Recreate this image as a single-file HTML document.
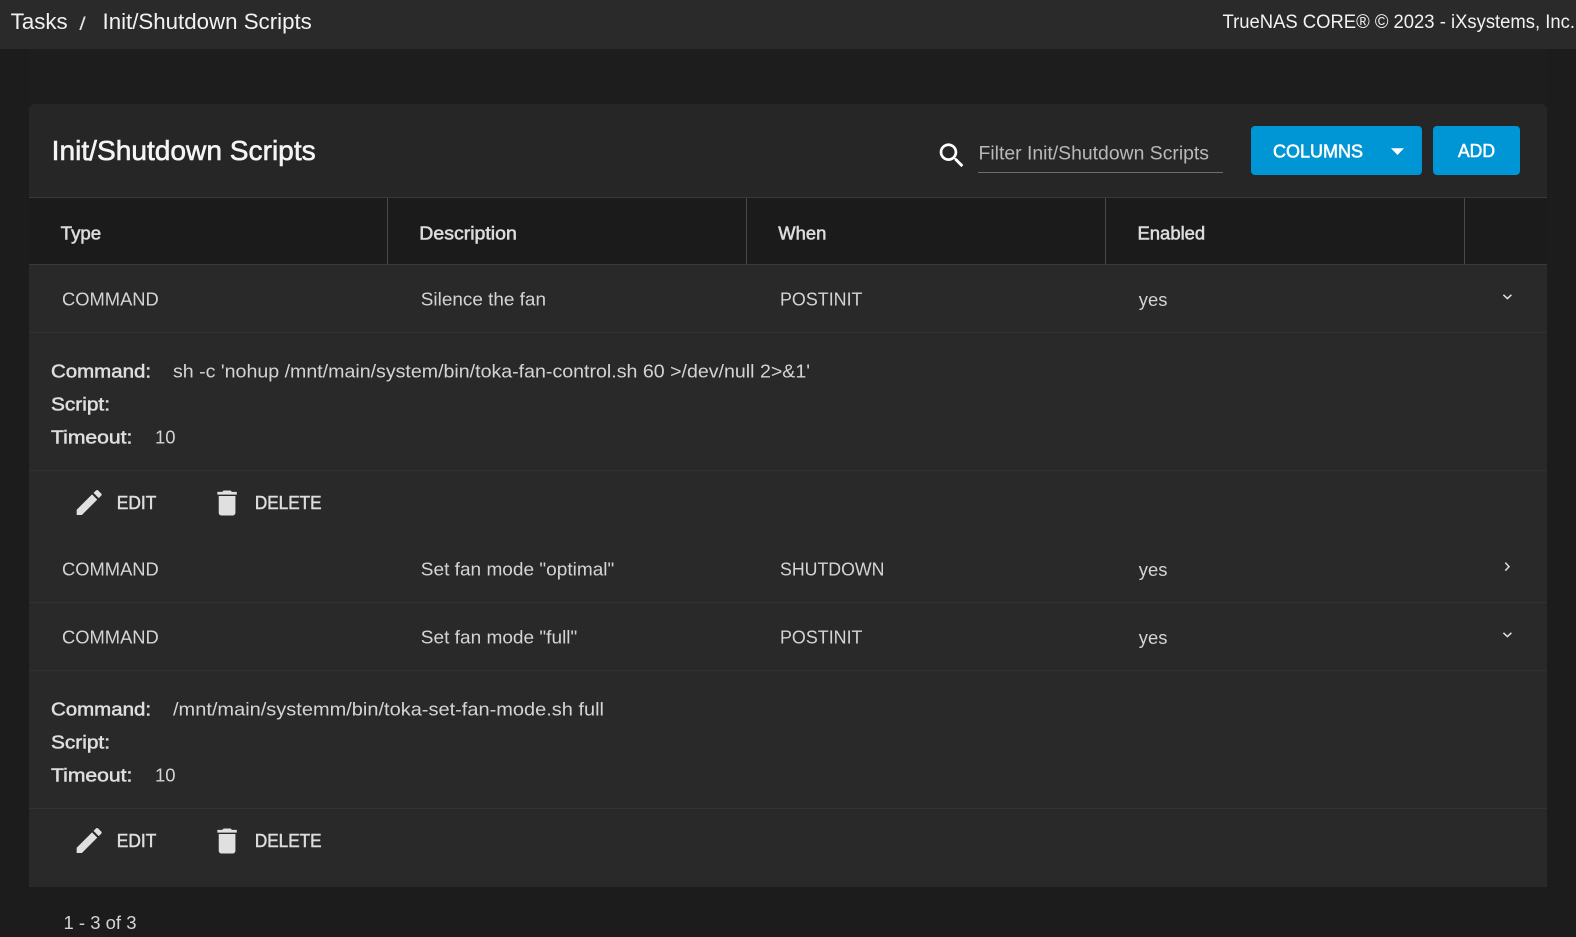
<!DOCTYPE html>
<html><head><meta charset="utf-8"><title>Init/Shutdown Scripts</title>
<style>
html,body{margin:0;padding:0;width:1576px;height:937px;overflow:hidden;background:#1c1c1c}
svg{display:block}
text{font-family:"Liberation Sans",sans-serif;font-size:18px;fill:#d4d4d4}
.m{fill:#dedede;stroke:#dedede;stroke-width:.5px}
.h{fill:#dcdcdc;stroke:#dcdcdc;stroke-width:.55px}
</style></head><body>
<svg width="1576" height="937" viewBox="0 0 1576 937" xmlns="http://www.w3.org/2000/svg">
<rect width="1576" height="937" fill="#1c1c1c"/>
<rect x="29" y="49" width="1518" height="55" fill="#1d1d1d"/>
<rect width="1576" height="49" fill="#2a2a2a"/>
<text x="10.7" y="29" style="font-size:22px;fill:#f2f2f2" textLength="57" lengthAdjust="spacingAndGlyphs">Tasks</text>
<text x="79.3" y="30" style="font-size:18px;fill:#e6e6e6" textLength="6.5" lengthAdjust="spacingAndGlyphs">/</text>
<text x="102.5" y="29" style="font-size:22px;fill:#f2f2f2" textLength="209.3" lengthAdjust="spacingAndGlyphs">Init/Shutdown Scripts</text>
<text x="1222.5" y="28" style="font-size:19px;fill:#f2f2f2" textLength="352.5" lengthAdjust="spacingAndGlyphs">TrueNAS CORE® © 2023 - iXsystems, Inc.</text>

<path d="M29 887V110a6 6 0 0 1 6-6H1541a6 6 0 0 1 6 6V887Z" fill="#292929"/>
<path d="M29 197V110a6 6 0 0 1 6-6H1541a6 6 0 0 1 6 6V197Z" fill="#262626"/>
<text x="51.7" y="160" style="font-size:28px;fill:#f4f4f4;stroke:#f4f4f4;stroke-width:.6px" textLength="264" lengthAdjust="spacingAndGlyphs">Init/Shutdown Scripts</text>

<g transform="translate(935.6 139.3) scale(1.355)"><path fill="#fff" d="M15.5 14h-.79l-.28-.27C15.41 12.59 16 11.11 16 9.5 16 5.91 13.09 3 9.5 3S3 5.91 3 9.5 5.91 16 9.5 16c1.61 0 3.09-.59 4.23-1.57l.27.28v.79l5 4.99L20.49 19l-4.99-5zm-6 0C7.01 14 5 11.99 5 9.5S7.01 5 9.5 5 14 7.01 14 9.5 11.99 14 9.5 14z"/></g>
<text x="978.5" y="159.3" style="font-size:19px;fill:#b8b8b8" textLength="230.5" lengthAdjust="spacingAndGlyphs">Filter Init/Shutdown Scripts</text>
<rect x="978" y="172" width="245" height="1" fill="#6e6e6e"/>

<rect x="1251" y="126" width="171" height="49" rx="4" fill="#0095d5"/>
<text x="1273" y="157.5" style="fill:#fff;stroke:#fff;stroke-width:.55px" textLength="90" lengthAdjust="spacingAndGlyphs">COLUMNS</text>
<path d="M1391 148.3H1404L1397.5 155Z" fill="#fff"/>
<rect x="1433" y="126" width="87" height="49" rx="4" fill="#0095d5"/>
<text x="1458" y="157" style="fill:#fff;stroke:#fff;stroke-width:.55px" textLength="37" lengthAdjust="spacingAndGlyphs">ADD</text>

<rect x="29" y="197" width="1518" height="67" fill="#1b1b1b"/>
<rect x="29" y="197" width="1518" height="1" fill="#393939"/>
<rect x="29" y="264" width="1518" height="1" fill="#393939"/>
<rect x="387" y="198" width="1" height="66" fill="#484848"/>
<rect x="746" y="198" width="1" height="66" fill="#484848"/>
<rect x="1105" y="198" width="1" height="66" fill="#484848"/>
<rect x="1464" y="198" width="1" height="66" fill="#484848"/>
<text class="h" x="60.7" y="239.5" textLength="40.5" lengthAdjust="spacingAndGlyphs">Type</text>
<text class="h" x="419.3" y="239.5" textLength="97.5" lengthAdjust="spacingAndGlyphs">Description</text>
<text class="h" x="778.3" y="239.5" textLength="48" lengthAdjust="spacingAndGlyphs">When</text>
<text class="h" x="1137.5" y="239.5" textLength="67.7" lengthAdjust="spacingAndGlyphs">Enabled</text>

<!-- row 1 -->
<text x="62" y="305.7" textLength="96.8" lengthAdjust="spacingAndGlyphs">COMMAND</text>
<text x="420.8" y="305.7" textLength="125.2" lengthAdjust="spacingAndGlyphs">Silence the fan</text>
<text x="780" y="305.7" textLength="82.5" lengthAdjust="spacingAndGlyphs">POSTINIT</text>
<text x="1138.8" y="305.9" textLength="28.6" lengthAdjust="spacingAndGlyphs">yes</text>
<path d="M1503.4 294.8L1507.4 298.6L1511.4 294.8" fill="none" stroke="#e0e0e0" stroke-width="1.5"/>
<rect x="29" y="332" width="1518" height="1" fill="#323232"/>
<text class="m" x="51" y="377.4" textLength="100" lengthAdjust="spacingAndGlyphs">Command:</text>
<text x="173" y="377.4" textLength="637" lengthAdjust="spacingAndGlyphs">sh -c 'nohup /mnt/main/system/bin/toka-fan-control.sh 60 &gt;/dev/null 2&gt;&amp;1'</text>
<text class="m" x="51" y="410.7" textLength="59" lengthAdjust="spacingAndGlyphs">Script:</text>
<text class="m" x="51" y="443.6" textLength="81.4" lengthAdjust="spacingAndGlyphs">Timeout:</text>
<text x="155" y="443.6" textLength="20.5" lengthAdjust="spacingAndGlyphs">10</text>
<rect x="29" y="470" width="1518" height="1" fill="#323232"/>
<g transform="translate(72.5 485.8) scale(1.39)"><path fill="#e0e0e0" d="M3 17.25V21h3.75L17.81 9.94l-3.75-3.75L3 17.25zM20.71 7.04c.39-.39.39-1.02 0-1.41l-2.34-2.34c-.39-.39-1.02-.39-1.41 0l-1.83 1.83 3.75 3.75 1.83-1.83z"/></g>
<text class="m" x="116.8" y="508.8" textLength="39.5" lengthAdjust="spacingAndGlyphs">EDIT</text>
<g transform="translate(210.4 486.3) scale(1.39)"><path fill="#e0e0e0" d="M6 19c0 1.1.9 2 2 2h8c1.1 0 2-.9 2-2V7H6v12zM19 4h-3.5l-1-1h-5l-1 1H5v2h14V4z"/></g>
<text class="m" x="254.9" y="508.8" textLength="66.6" lengthAdjust="spacingAndGlyphs">DELETE</text>

<!-- row 2 -->
<text x="62" y="575.7" textLength="96.8" lengthAdjust="spacingAndGlyphs">COMMAND</text>
<text x="420.8" y="575.7" textLength="193.5" lengthAdjust="spacingAndGlyphs">Set fan mode "optimal"</text>
<text x="780" y="575.7" textLength="104.5" lengthAdjust="spacingAndGlyphs">SHUTDOWN</text>
<text x="1138.8" y="575.9" textLength="28.6" lengthAdjust="spacingAndGlyphs">yes</text>
<path d="M1505.3 562.6L1509 566.6L1505.3 570.6" fill="none" stroke="#e0e0e0" stroke-width="1.5"/>
<rect x="29" y="602" width="1518" height="1" fill="#323232"/>

<!-- row 3 -->
<text x="62" y="643.7" textLength="96.8" lengthAdjust="spacingAndGlyphs">COMMAND</text>
<text x="420.8" y="643.7" textLength="156.5" lengthAdjust="spacingAndGlyphs">Set fan mode "full"</text>
<text x="780" y="643.7" textLength="82.5" lengthAdjust="spacingAndGlyphs">POSTINIT</text>
<text x="1138.8" y="643.9" textLength="28.6" lengthAdjust="spacingAndGlyphs">yes</text>
<path d="M1503.4 632.8L1507.4 636.6L1511.4 632.8" fill="none" stroke="#e0e0e0" stroke-width="1.5"/>
<rect x="29" y="670" width="1518" height="1" fill="#323232"/>
<text class="m" x="51" y="715.4" textLength="100" lengthAdjust="spacingAndGlyphs">Command:</text>
<text x="173" y="715.4" textLength="431" lengthAdjust="spacingAndGlyphs">/mnt/main/systemm/bin/toka-set-fan-mode.sh full</text>
<text class="m" x="51" y="748.7" textLength="59" lengthAdjust="spacingAndGlyphs">Script:</text>
<text class="m" x="51" y="781.6" textLength="81.4" lengthAdjust="spacingAndGlyphs">Timeout:</text>
<text x="155" y="781.6" textLength="20.5" lengthAdjust="spacingAndGlyphs">10</text>
<rect x="29" y="808" width="1518" height="1" fill="#323232"/>
<g transform="translate(72.5 823.8) scale(1.39)"><path fill="#e0e0e0" d="M3 17.25V21h3.75L17.81 9.94l-3.75-3.75L3 17.25zM20.71 7.04c.39-.39.39-1.02 0-1.41l-2.34-2.34c-.39-.39-1.02-.39-1.41 0l-1.83 1.83 3.75 3.75 1.83-1.83z"/></g>
<text class="m" x="116.8" y="846.8" textLength="39.5" lengthAdjust="spacingAndGlyphs">EDIT</text>
<g transform="translate(210.4 824.3) scale(1.39)"><path fill="#e0e0e0" d="M6 19c0 1.1.9 2 2 2h8c1.1 0 2-.9 2-2V7H6v12zM19 4h-3.5l-1-1h-5l-1 1H5v2h14V4z"/></g>
<text class="m" x="254.9" y="846.8" textLength="66.6" lengthAdjust="spacingAndGlyphs">DELETE</text>

<text x="63.5" y="929" textLength="73" lengthAdjust="spacingAndGlyphs">1 - 3 of 3</text>
</svg>
</body></html>
